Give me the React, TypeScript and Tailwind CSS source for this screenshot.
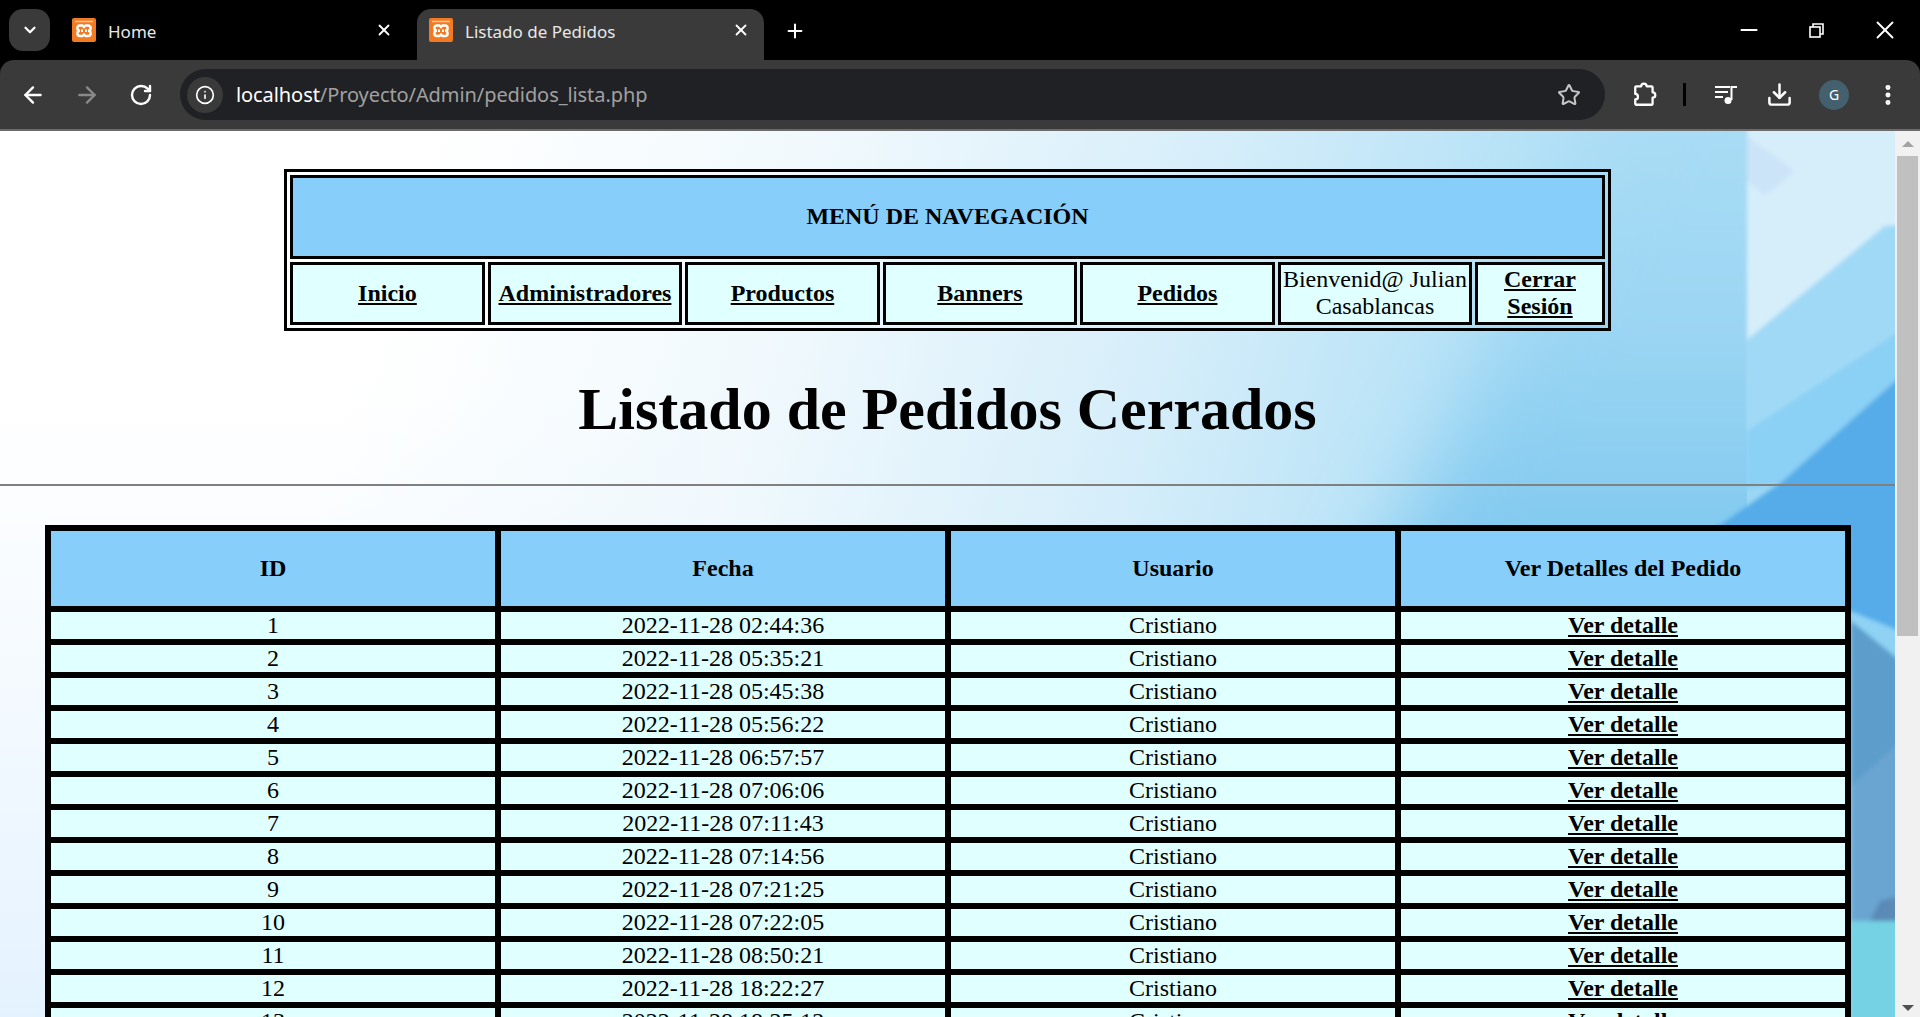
import { ArrowLeft, ArrowRight, ChevronDown, Download, EllipsisVertical, Info, Minus, Plus, RotateCw, Star, X } from "lucide-react";

const orders = [
  ["1", "2022-11-28 02:44:36"],
  ["2", "2022-11-28 05:35:21"],
  ["3", "2022-11-28 05:45:38"],
  ["4", "2022-11-28 05:56:22"],
  ["5", "2022-11-28 06:57:57"],
  ["6", "2022-11-28 07:06:06"],
  ["7", "2022-11-28 07:11:43"],
  ["8", "2022-11-28 07:14:56"],
  ["9", "2022-11-28 07:21:25"],
  ["10", "2022-11-28 07:22:05"],
  ["11", "2022-11-28 08:50:21"],
  ["12", "2022-11-28 18:22:27"],
  ["13", "2022-11-28 18:25:12"],
];

const menuCell = "border-[3px] border-black bg-[#e0ffff] h-[63px] p-0 text-center align-middle leading-[27px]";
const headCell = "border-[3px] border-black bg-[#87cefa] h-[81px] p-0 text-center align-middle font-bold";
const bodyCell = "border-[3px] border-black bg-[#e0ffff] h-[33px] p-0 text-center align-middle";

function Favicon() {
  return (
    <svg width="24" height="24" viewBox="0 0 24 24" className="shrink-0">
      <rect x="0" y="0" width="24" height="24" rx="2" fill="#f27a22" />
      <path d="M3 3.500H21" stroke="#f9c9a0" strokeWidth="1.500" />
      <path
        d="M8 7.500H10.500L12 9L13.500 7.500H16a2.500 2.500 0 0 1 0 5.250a2.500 2.500 0 0 1 0 5.250H13.500L12 16.500L10.500 18H8a2.500 2.500 0 0 1 0-5.250a2.500 2.500 0 0 1 0-5.250ZM9 12.750H11M15 12.750H13"
        fill="none"
        stroke="#fff"
        strokeWidth="2.400"
      />
    </svg>
  );
}

function Tab({ title, active }: { title: string; active?: boolean }) {
  return (
    <div
      className={`flex h-[51px] items-center rounded-t-[14px] pb-[9px] pl-3 ${
        active ? "w-[347px] bg-[#3a3a3a] pr-[14px]" : "w-[357px] pr-[24px]"
      }`}
    >
      <Favicon />
      <span className="mt-[3px] ml-3 flex-1 text-[17px] text-[#e8e8e8]">{title}</span>
      <X size={18} strokeWidth={2.4} className="text-white" />
    </div>
  );
}

function QueueIcon() {
  return (
    <svg width="24" height="24" viewBox="0 0 24 24" fill="none" stroke="#fff" strokeWidth="2">
      <path d="M1 4H16M1 9H14M1 14H9" />
      <path d="M17.500 17V4H23" />
      <circle cx="14" cy="17.500" r="3.500" fill="#fff" stroke="none" />
    </svg>
  );
}

function ExtensionIcon() {
  return (
    <svg width="26" height="26" viewBox="0 0 24 24" fill="none" stroke="#fff" strokeWidth="2.100" strokeLinejoin="round">
      <path d="M8.500 4a2.500 2.500 0 0 1 5 0h4.500a1 1 0 0 1 1 1v4.500a2.500 2.500 0 0 1 0 5V20a1 1 0 0 1-1 1H4a1 1 0 0 1-1-1v-4a2.500 2.500 0 0 0 0-5V5a1 1 0 0 1 1-1Z" />
    </svg>
  );
}

function PageBackground() {
  return (
    <svg className="absolute inset-0 h-full w-full" viewBox="0 0 1895 886" preserveAspectRatio="none">
      <defs>
        <linearGradient id="base" gradientUnits="userSpaceOnUse" x1="420" y1="0" x2="1895" y2="420">
          <stop offset="0" stopColor="#ffffff" />
          <stop offset="0.25" stopColor="#f1f9fd" />
          <stop offset="0.5" stopColor="#d6eefa" />
          <stop offset="0.72" stopColor="#b2e0f6" />
          <stop offset="1" stopColor="#8fd2f4" />
        </linearGradient>
        <linearGradient id="left" x1="0" y1="0" x2="0" y2="1">
          <stop offset="0.3" stopColor="#eaf5ff" stopOpacity="0" />
          <stop offset="1" stopColor="#e4f2ff" />
        </linearGradient>
        <linearGradient id="column" x1="0" y1="0" x2="0" y2="1">
          <stop offset="0" stopColor="#b0dff5" />
          <stop offset="0.5" stopColor="#9ad5f3" />
          <stop offset="1" stopColor="#74c3ee" />
        </linearGradient>
        <filter id="soft">
          <feGaussianBlur stdDeviation="2" />
        </filter>
        <filter id="softer">
          <feGaussianBlur stdDeviation="40" />
        </filter>
        <clipPath id="seam">
          <rect x="0" y="0" width="1747" height="886" />
        </clipPath>
      </defs>
      <rect width="1895" height="886" fill="url(#base)" />
      <rect width="700" height="886" fill="url(#left)" />
      <g clipPath="url(#seam)">
        <polygon points="1660,-100 1860,-100 1860,520 1340,520" fill="url(#column)" filter="url(#softer)" />
      </g>
      <g filter="url(#soft)">
        <polygon points="1747,-5 1900,-5 1900,95 1885,95 1747,209" fill="#d6eefa" />
        <polygon points="1747,5 1795,40 1765,65 1747,50" fill="#cce4f8" />
        <polygon points="1900,100 1885,95 1747,209 1747,300 1900,200" fill="#a0d9f6" />
        <polygon points="1747,209 1747,300 1900,200 1900,246 1783,350 1747,360" fill="#8bd0f5" />
        <polygon points="1900,246 1783,350 1690,415 1900,500" fill="#54ace8" />
        <polygon points="1851,490 1900,530 1900,790 1851,790" fill="#5b9dcc" />
        <polygon points="1851,655 1900,610 1900,790 1851,790" fill="#6aa4d0" />
        <polygon points="1870,790 1880,770 1900,765 1900,790" fill="#5a8ab5" />
        <polygon points="1851,790 1900,790 1900,890 1851,890" fill="#75d2e4" />
      </g>
    </svg>
  );
}

export default function App() {
  return (
    <div className="flex h-screen w-full flex-col overflow-hidden bg-black font-['Noto_Sans',sans-serif]">
      {/* pestañas */}
      <div className="flex h-[60px] shrink-0 items-end pl-[9px]">
        <div className="mb-[9px] flex h-[42px] w-[41px] items-center justify-center rounded-[14px] bg-[#3a3a3a]">
          <ChevronDown size={18} strokeWidth={3} className="text-white" />
        </div>
        <div className="ml-[10px]">
          <Tab title="Home" />
        </div>
        <Tab title="Listado de Pedidos" active />
        <div className="mb-[18px] ml-[20px]">
          <Plus size={22} strokeWidth={2.2} className="text-white" />
        </div>
        <div className="mb-[15px] ml-auto flex items-center">
          <Minus size={26} strokeWidth={1.8} className="mr-[47px] text-white" />
          <svg width="15" height="15" viewBox="0 0 15 15" fill="none" stroke="#fff" strokeWidth="1.600" className="mr-[46px]">
            <rect x="1" y="4" width="10" height="10" />
            <path d="M4 4V1H14V11H11" />
          </svg>
          <X size={30} strokeWidth={1.5} className="mr-[20px] text-white" />
        </div>
      </div>

      {/* barra de direcciones */}
      <div className="flex h-[71px] shrink-0 items-start rounded-t-[14px] border-b-2 border-[#6b6b6b] bg-[#3a3a3a] pt-[9px]">
        <div className="flex h-[51px] w-[180px] items-center pl-[20px]">
          <ArrowLeft size={26} strokeWidth={2.2} className="text-white" />
          <ArrowRight size={26} strokeWidth={2.2} className="ml-[28px] text-[#8a8a8a]" />
          <RotateCw size={24} strokeWidth={2.4} className="ml-[29px] text-white" />
        </div>
        <div className="flex h-[51px] w-[1425px] items-center rounded-full bg-[#202124] pl-[7px]">
          <div className="flex h-9 w-9 items-center justify-center rounded-full bg-[#3a3a3a]">
            <Info size={20} strokeWidth={2} className="text-white" />
          </div>
          <span className="ml-[13px] flex-1 text-[20px] tracking-[-0.08px] text-[#a0a0a0]">
            <span className="text-white">localhost</span>/Proyecto/Admin/pedidos_lista.php
          </span>
          <Star size={24} strokeWidth={2} className="mr-6 text-[#c4c7c5]" />
        </div>
        <div className="flex h-[51px] flex-1 items-center pl-[27px]">
          <ExtensionIcon />
          <div className="ml-[25px] h-[23px] w-[3px] bg-black" />
          <div className="ml-[28px]"><QueueIcon /></div>
          <Download size={27} strokeWidth={2.2} className="ml-[28px] text-white" />
          <div className="ml-[26px] flex h-[30px] w-[30px] items-center justify-center rounded-full bg-[#44606f] text-[14px] text-white">
            G
          </div>
          <EllipsisVertical size={26} strokeWidth={2.6} className="ml-[26px] text-white" />
        </div>
      </div>

      {/* contenido */}
      <div className="flex min-h-0 flex-1">
        <main className="relative min-w-0 flex-1 overflow-hidden font-['Liberation_Serif',serif] text-[24px] leading-[27px] text-black">
          <PageBackground />
          <div className="relative pt-[38px]">
            <table className="mx-auto w-[1327px] table-fixed border-separate border-spacing-[3px] border-[3px] border-black">
              <colgroup>
                <col className="w-[195px]" />
                <col className="w-[194px]" />
                <col className="w-[195px]" />
                <col className="w-[194px]" />
                <col className="w-[195px]" />
                <col className="w-[194px]" />
                <col className="w-[130px]" />
              </colgroup>
              <tbody>
                <tr>
                  <td colSpan={7} className="h-[84px] border-[3px] border-black bg-[#87cefa] p-0 pb-[2px] text-center align-middle font-bold">
                    MENÚ DE NAVEGACIÓN
                  </td>
                </tr>
                <tr>
                  {["Inicio", "Administradores", "Productos", "Banners", "Pedidos"].map((item) => (
                    <td key={item} className={menuCell}>
                      <a href="#" className="font-bold underline">{item}</a>
                    </td>
                  ))}
                  <td className={`${menuCell} pb-[2px]`}>Bienvenid@ Julian Casablancas</td>
                  <td className={`${menuCell} pb-[2px]`}>
                    <a href="#" className="font-bold underline">Cerrar Sesión</a>
                  </td>
                </tr>
              </tbody>
            </table>

            <h1 className="mt-[44px] mb-[40px] text-center text-[60px] leading-[69px] font-bold">
              Listado de Pedidos Cerrados
            </h1>
            <hr className="border-t-2 border-[#808080]" />

            <table className="mt-[39px] ml-[45px] w-[1806px] table-fixed border-separate border-spacing-0 border-[3px] border-black">
              <thead>
                <tr>
                  <th className={headCell}>ID</th>
                  <th className={headCell}>Fecha</th>
                  <th className={headCell}>Usuario</th>
                  <th className={headCell}>Ver Detalles del Pedido</th>
                </tr>
              </thead>
              <tbody>
                {orders.map(([id, date]) => (
                  <tr key={id}>
                    <td className={bodyCell}>{id}</td>
                    <td className={bodyCell}>{date}</td>
                    <td className={bodyCell}>Cristiano</td>
                    <td className={bodyCell}>
                      <a href="#" className="font-bold underline">Ver detalle</a>
                    </td>
                  </tr>
                ))}
              </tbody>
            </table>
          </div>
        </main>

        {/* barra de desplazamiento */}
        <div className="flex w-[25px] shrink-0 flex-col items-center bg-[#f1f1f1]">
          <div className="mt-[10px] h-0 w-0 border-x-[6px] border-b-[6px] border-x-transparent border-b-[#a3a3a3]" />
          <div className="mt-[9px] h-[480px] w-[21px] bg-[#c0c0c0]" />
          <div className="mt-auto mb-[6px] h-0 w-0 border-x-[6px] border-t-[6px] border-x-transparent border-t-[#505050]" />
        </div>
      </div>
    </div>
  );
}
